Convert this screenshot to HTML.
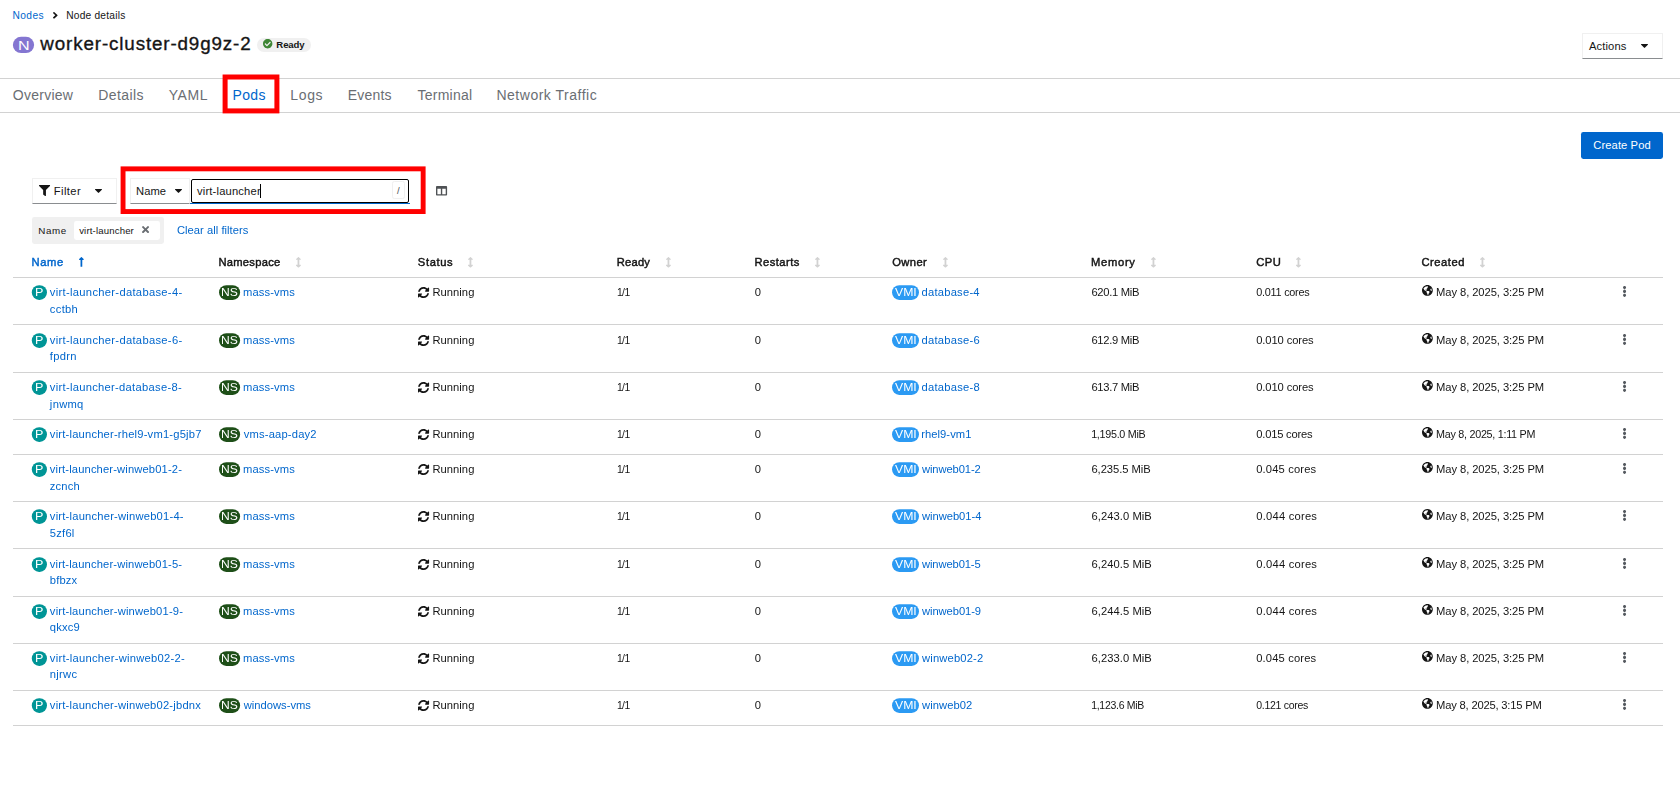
<!DOCTYPE html>
<html lang="en"><head><meta charset="utf-8"><title>worker-cluster-d9g9z-2 · Node details</title>
<style>
html,body{margin:0;padding:0;background:#fff}
body{width:1680px;height:792px;position:relative;overflow:hidden;font-family:"Liberation Sans",sans-serif;color:#151515}
.t{position:absolute;white-space:nowrap;margin:0;font-weight:400;text-decoration:none;display:block}
.i{position:absolute;display:block;overflow:visible}
.b{position:absolute}
.c{display:contents}
.g{position:absolute;left:0;top:0;width:1680px;height:792px;will-change:transform}
</style></head><body>
<nav class="c" aria-label="Breadcrumb">
<a class="t" style="left:12.56px;top:8.00px;font-size:10.2px;line-height:15.3px;color:#0066cc;letter-spacing:0.380px;">Nodes</a>
<svg class="i" style="left:52.50px;top:12.10px;width:4.60px;height:6.70px" viewBox="24.75 95.95 206.59 320.1" preserveAspectRatio="none" fill="#151515"><path d="M224.3 273l-136 136c-9.4 9.4-24.6 9.4-33.9 0l-22.6-22.6c-9.4-9.4-9.4-24.6 0-33.900l96.400-96.400-96.400-96.400c-9.400-9.400-9.400-24.600 0-33.900L54.300 103c9.400-9.400 24.600-9.400 33.900 0l136 136c9.500 9.400 9.500 24.600.1 34z"/></svg>
<span class="t" style="left:66.16px;top:8.00px;font-size:10.2px;line-height:15.3px;color:#151515;letter-spacing:0.227px;">Node details</span>
</nav>
<header class="c">
<svg class="i" style="left:11px;top:35px;width:25px;height:20px" viewBox="0 0 25 20"><rect x="1.90" y="1.80" width="21.20" height="16.30" rx="8.15" fill="#8476d1"/></svg>
<span class="t" style="left:18.08px;top:36.00px;font-size:13px;line-height:19.5px;color:#fff;transform:scaleX(1.238);transform-origin:0 0;">N</span>
<h1 class="t" style="left:40.33px;top:30.00px;font-size:18.8px;line-height:28.2px;color:#151515;letter-spacing:0.870px;-webkit-text-stroke:0.35px #151515;">worker-cluster-d9g9z-2</h1>
<div class="b" style="left:257.00px;top:38.00px;width:54.00px;height:14.00px;border-radius:7px;background:#f0f0f0"></div>
<svg class="i" style="left:263.10px;top:39.30px;width:9.40px;height:9.40px" viewBox="8 8 496 496" preserveAspectRatio="none" fill="#3e8635"><path d="M504 256c0 136.967-111.033 248-248 248S8 392.967 8 256 119.033 8 256 8s248 111.033 248 248zM227.314 387.314l184-184c6.248-6.248 6.248-16.379 0-22.627l-22.627-22.627c-6.248-6.249-16.379-6.249-22.628 0L216 308.118l-70.059-70.059c-6.248-6.248-16.379-6.248-22.628 0l-22.627 22.627c-6.248 6.248-6.248 16.379 0 22.627l104 104c6.249 6.249 16.379 6.249 22.628.001z"/></svg>
<span class="t" style="left:276.36px;top:38.00px;font-size:9.6px;line-height:14.4px;color:#151515;letter-spacing:-0.157px;font-weight:700;">Ready</span>
<div class="b" style="left:1582.00px;top:33.00px;width:81.00px;height:26.00px;border:1px solid #f0f0f0;border-bottom:1px solid #8a8d90;box-sizing:border-box;background:#fff"></div>
<span class="t" style="left:1588.98px;top:38.00px;font-size:11.2px;line-height:16.8px;color:#151515;letter-spacing:0.115px;">Actions</span>
<svg class="i" style="left:1641.00px;top:44.00px;width:7.00px;height:4.00px" viewBox="11.3 192 297.31 168.65" preserveAspectRatio="none" fill="#151515"><path d="M31.3 192h257.3c17.8 0 26.7 21.5 14.1 34.1L174.1 354.8c-7.8 7.8-20.5 7.8-28.3 0L17.2 226.1C4.6 213.5 13.5 192 31.3 192z"/></svg>
</header>
<nav class="c" aria-label="Node tabs">
<div class="b" style="left:0.00px;top:78.00px;width:1680.00px;height:1.00px;background:#d2d2d2"></div>
<div class="b" style="left:0.00px;top:112.00px;width:1680.00px;height:1.00px;background:#d2d2d2"></div>
<span class="t" style="left:12.84px;top:85.00px;font-size:14px;line-height:21.0px;color:#6a6e73;letter-spacing:0.253px;">Overview</span>
<span class="t" style="left:98.35px;top:85.00px;font-size:14px;line-height:21.0px;color:#6a6e73;letter-spacing:0.394px;">Details</span>
<span class="t" style="left:168.69px;top:85.00px;font-size:14px;line-height:21.0px;color:#6a6e73;letter-spacing:0.561px;">YAML</span>
<span class="t" style="left:232.55px;top:85.00px;font-size:14px;line-height:21.0px;color:#0066cc;letter-spacing:0.346px;">Pods</span>
<span class="t" style="left:290.35px;top:85.00px;font-size:14px;line-height:21.0px;color:#6a6e73;letter-spacing:0.631px;">Logs</span>
<span class="t" style="left:347.65px;top:85.00px;font-size:14px;line-height:21.0px;color:#6a6e73;letter-spacing:0.231px;">Events</span>
<span class="t" style="left:417.39px;top:85.00px;font-size:14px;line-height:21.0px;color:#6a6e73;letter-spacing:0.277px;">Terminal</span>
<span class="t" style="left:496.45px;top:85.00px;font-size:14px;line-height:21.0px;color:#6a6e73;letter-spacing:0.515px;">Network Traffic</span>
<svg class="i" style="left:221px;top:73px;width:60px;height:42px" viewBox="0 0 60 42"><rect x="4.10" y="4.00" width="51.80" height="33.90" fill="none" stroke="#ff0000" stroke-width="5"/></svg>
</nav>
<main class="c">
<div class="b" style="left:1581.00px;top:132.00px;width:82.00px;height:27.00px;background:#0066cc;border-radius:2.4px"></div>
<span class="t" style="left:1593.33px;top:137.00px;font-size:11.2px;line-height:16.8px;color:#fff;letter-spacing:0.081px;">Create Pod</span>
<div class="c" role="toolbar">
<div class="b" style="left:32.00px;top:178.00px;width:85.00px;height:26.00px;border:1px solid #f0f0f0;border-bottom:1px solid #8a8d90;box-sizing:border-box"></div>
<svg class="i" style="left:39.00px;top:185.00px;width:11.10px;height:11.10px" viewBox="0 0 512 512" preserveAspectRatio="none" fill="#151515"><path d="M487.976 0H24.028C2.71 0-8.047 25.866 7.058 40.971L192 225.941V432c0 7.831 3.821 15.17 10.237 19.662l80 55.98C298.02 518.69 320 507.493 320 487.98V225.941l184.947-184.97C520.021 25.896 509.338 0 487.976 0z"/></svg>
<span class="t" style="left:53.78px;top:183.00px;font-size:11.2px;line-height:16.8px;color:#151515;letter-spacing:0.403px;">Filter</span>
<svg class="i" style="left:95.00px;top:189.30px;width:7.00px;height:4.00px" viewBox="11.3 192 297.31 168.65" preserveAspectRatio="none" fill="#151515"><path d="M31.3 192h257.3c17.8 0 26.7 21.5 14.1 34.1L174.1 354.8c-7.8 7.8-20.5 7.8-28.3 0L17.2 226.1C4.6 213.5 13.5 192 31.3 192z"/></svg>
<div class="b" style="left:130.00px;top:178.00px;width:60.00px;height:26.00px;border:1px solid #f0f0f0;border-bottom:1px solid #8a8d90;box-sizing:border-box"></div>
<span class="t" style="left:136.08px;top:183.00px;font-size:11.2px;line-height:16.8px;color:#151515;letter-spacing:0.045px;">Name</span>
<svg class="i" style="left:175.00px;top:189.30px;width:7.00px;height:4.00px" viewBox="11.3 192 297.31 168.65" preserveAspectRatio="none" fill="#151515"><path d="M31.3 192h257.3c17.8 0 26.7 21.5 14.1 34.1L174.1 354.8c-7.8 7.8-20.5 7.8-28.3 0L17.2 226.1C4.6 213.5 13.5 192 31.3 192z"/></svg>
<div class="b" style="left:190.60px;top:179.00px;width:218.60px;height:24.00px;border:1.6px solid #000;border-radius:2px;box-sizing:border-box"></div>
<div class="b" style="left:190.00px;top:203.00px;width:220.00px;height:1.00px;background:#0066cc"></div>
<span class="t" style="left:196.97px;top:183.00px;font-size:11.2px;line-height:16.8px;color:#151515;letter-spacing:0.175px;">virt-launcher</span>
<div class="b" style="left:260.00px;top:184.20px;width:1.20px;height:13.60px;background:#000"></div>
<div class="b" style="left:392.20px;top:181.40px;width:12.40px;height:17.20px;border:1px solid #f0f0f0;border-radius:2.4px;box-sizing:border-box"></div>
<span class="t" style="left:397.00px;top:184.00px;font-size:9.6px;line-height:14.4px;color:#4f5255;">/</span>
<svg class="i" style="left:119px;top:165px;width:308px;height:50px" viewBox="0 0 308 50"><rect x="4.05" y="3.85" width="300.10" height="42.70" fill="none" stroke="#ff0000" stroke-width="4.9"/></svg>
<svg class="i" style="left:436.00px;top:185.80px;width:11.10px;height:9.60px" viewBox="0 32 512 448" preserveAspectRatio="none" fill="#4f5255"><path d="M464 32H48C21.49 32 0 53.49 0 80v352c0 26.51 21.49 48 48 48h416c26.510 0 48-21.490 48-48V80c0-26.510-21.490-48-48-48zM224 416H64V160h160v256zm224 0H288V160h160v256z"/></svg>
</div>
<div class="c" role="group" aria-label="Name">
<div class="b" style="left:32.20px;top:217.30px;width:131.80px;height:26.40px;background:#f0f0f0;border-radius:2.4px"></div>
<span class="t" style="left:38.20px;top:224.00px;font-size:9.8px;line-height:14.7px;color:#151515;letter-spacing:0.631px;">Name</span>
<div class="b" style="left:74.00px;top:220.80px;width:86.00px;height:19.20px;background:#fff;border-radius:2.4px"></div>
<span class="t" style="left:79.17px;top:224.00px;font-size:9.6px;line-height:14.4px;color:#151515;letter-spacing:0.156px;">virt-launcher</span>
<svg class="i" style="left:142.10px;top:226.10px;width:7.10px;height:7.10px" viewBox="0 80 352 352" preserveAspectRatio="none" fill="#6a6e73"><path d="M242.72 256l100.07-100.07c12.28-12.28 12.28-32.19 0-44.48l-22.24-22.24c-12.28-12.28-32.19-12.28-44.48 0L176 189.28 75.93 89.21c-12.28-12.28-32.19-12.28-44.48 0L9.21 111.45c-12.28 12.28-12.28 32.19 0 44.48L109.28 256 9.21 356.07c-12.28 12.28-12.28 32.19 0 44.48l22.24 22.24c12.28 12.28 32.2 12.28 44.48 0L176 322.72l100.07 100.07c12.28 12.28 32.2 12.28 44.48 0l22.24-22.24c12.28-12.28 12.28-32.19 0-44.48L242.72 256z"/></svg>
<a class="t" style="left:177.23px;top:222.00px;font-size:11.2px;line-height:16.8px;color:#0066cc;letter-spacing:0.026px;will-change:transform;">Clear all filters</a>
</div>
<div class="g" role="table" aria-label="Pods">
<div class="c" role="row">
<span class="t" style="left:31.58px;top:254.00px;font-size:11.2px;line-height:16.8px;color:#0066cc;letter-spacing:0.612px;-webkit-text-stroke:0.45px #0066cc;">Name</span>
<svg class="i" style="left:79.20px;top:256.70px;width:4.80px;height:9.70px" viewBox="17.89 32 220.21 448" preserveAspectRatio="none" fill="#0066cc"><path d="M88 166.059V468c0 6.627 5.373 12 12 12h56c6.627 0 12-5.373 12-12V166.059h46.059c21.382 0 32.09-25.851 16.971-40.971l-86.059-86.059c-9.373-9.373-24.569-9.373-33.941 0l-86.059 86.059c-15.119 15.119-4.411 40.971 16.971 40.971H88z"/></svg>
<span class="t" style="left:218.38px;top:254.00px;font-size:11.2px;line-height:16.8px;color:#151515;letter-spacing:0.269px;-webkit-text-stroke:0.45px #151515;">Namespace</span>
<svg class="i" style="left:295.90px;top:256.50px;width:4.90px;height:10.60px" viewBox="17.89 0 220.21 512" preserveAspectRatio="none" fill="#d2d2d2"><path d="M214.059 377.941H168V134.059h46.059c21.382 0 32.09-25.851 16.971-40.971L144.971 7.029c-9.373-9.373-24.568-9.373-33.941 0L24.971 93.088c-15.119 15.119-4.411 40.971 16.971 40.971H88v243.882H41.941c-21.382 0-32.09 25.851-16.971 40.971l86.059 86.059c9.373 9.373 24.568 9.373 33.941 0l86.059-86.059c15.12-15.119 4.412-40.971-16.97-40.971z"/></svg>
<span class="t" style="left:417.80px;top:254.00px;font-size:11.2px;line-height:16.8px;color:#151515;letter-spacing:0.631px;-webkit-text-stroke:0.45px #151515;">Status</span>
<svg class="i" style="left:468.40px;top:256.50px;width:4.90px;height:10.60px" viewBox="17.89 0 220.21 512" preserveAspectRatio="none" fill="#d2d2d2"><path d="M214.059 377.941H168V134.059h46.059c21.382 0 32.09-25.851 16.971-40.971L144.971 7.029c-9.373-9.373-24.568-9.373-33.941 0L24.971 93.088c-15.119 15.119-4.411 40.971 16.971 40.971H88v243.882H41.941c-21.382 0-32.09 25.851-16.971 40.971l86.059 86.059c9.373 9.373 24.568 9.373 33.941 0l86.059-86.059c15.12-15.119 4.412-40.971-16.97-40.971z"/></svg>
<span class="t" style="left:616.78px;top:254.00px;font-size:11.2px;line-height:16.8px;color:#151515;letter-spacing:0.215px;-webkit-text-stroke:0.45px #151515;">Ready</span>
<svg class="i" style="left:666.10px;top:256.50px;width:4.90px;height:10.60px" viewBox="17.89 0 220.21 512" preserveAspectRatio="none" fill="#d2d2d2"><path d="M214.059 377.941H168V134.059h46.059c21.382 0 32.09-25.851 16.971-40.971L144.971 7.029c-9.373-9.373-24.568-9.373-33.941 0L24.971 93.088c-15.119 15.119-4.411 40.971 16.971 40.971H88v243.882H41.941c-21.382 0-32.09 25.851-16.971 40.971l86.059 86.059c9.373 9.373 24.568 9.373 33.941 0l86.059-86.059c15.12-15.119 4.412-40.971-16.97-40.971z"/></svg>
<span class="t" style="left:754.38px;top:254.00px;font-size:11.2px;line-height:16.8px;color:#151515;letter-spacing:0.475px;-webkit-text-stroke:0.45px #151515;">Restarts</span>
<svg class="i" style="left:815.10px;top:256.50px;width:4.90px;height:10.60px" viewBox="17.89 0 220.21 512" preserveAspectRatio="none" fill="#d2d2d2"><path d="M214.059 377.941H168V134.059h46.059c21.382 0 32.09-25.851 16.971-40.971L144.971 7.029c-9.373-9.373-24.568-9.373-33.941 0L24.971 93.088c-15.119 15.119-4.411 40.971 16.971 40.971H88v243.882H41.941c-21.382 0-32.09 25.851-16.971 40.971l86.059 86.059c9.373 9.373 24.568 9.373 33.941 0l86.059-86.059c15.12-15.119 4.412-40.971-16.97-40.971z"/></svg>
<span class="t" style="left:892.17px;top:254.00px;font-size:11.2px;line-height:16.8px;color:#151515;letter-spacing:0.430px;-webkit-text-stroke:0.45px #151515;">Owner</span>
<svg class="i" style="left:942.80px;top:256.50px;width:4.90px;height:10.60px" viewBox="17.89 0 220.21 512" preserveAspectRatio="none" fill="#d2d2d2"><path d="M214.059 377.941H168V134.059h46.059c21.382 0 32.09-25.851 16.971-40.971L144.971 7.029c-9.373-9.373-24.568-9.373-33.941 0L24.971 93.088c-15.119 15.119-4.411 40.971 16.971 40.971H88v243.882H41.941c-21.382 0-32.09 25.851-16.971 40.971l86.059 86.059c9.373 9.373 24.568 9.373 33.941 0l86.059-86.059c15.12-15.119 4.412-40.971-16.97-40.971z"/></svg>
<span class="t" style="left:1091.08px;top:254.00px;font-size:11.2px;line-height:16.8px;color:#151515;letter-spacing:0.697px;-webkit-text-stroke:0.45px #151515;">Memory</span>
<svg class="i" style="left:1151.10px;top:256.50px;width:4.90px;height:10.60px" viewBox="17.89 0 220.21 512" preserveAspectRatio="none" fill="#d2d2d2"><path d="M214.059 377.941H168V134.059h46.059c21.382 0 32.09-25.851 16.971-40.971L144.971 7.029c-9.373-9.373-24.568-9.373-33.941 0L24.971 93.088c-15.119 15.119-4.411 40.971 16.971 40.971H88v243.882H41.941c-21.382 0-32.09 25.851-16.971 40.971l86.059 86.059c9.373 9.373 24.568 9.373 33.941 0l86.059-86.059c15.12-15.119 4.412-40.971-16.97-40.971z"/></svg>
<span class="t" style="left:1256.13px;top:254.00px;font-size:11.2px;line-height:16.8px;color:#151515;letter-spacing:0.540px;-webkit-text-stroke:0.45px #151515;">CPU</span>
<svg class="i" style="left:1296.10px;top:256.50px;width:4.90px;height:10.60px" viewBox="17.89 0 220.21 512" preserveAspectRatio="none" fill="#d2d2d2"><path d="M214.059 377.941H168V134.059h46.059c21.382 0 32.09-25.851 16.971-40.971L144.971 7.029c-9.373-9.373-24.568-9.373-33.941 0L24.971 93.088c-15.119 15.119-4.411 40.971 16.971 40.971H88v243.882H41.941c-21.382 0-32.09 25.851-16.971 40.971l86.059 86.059c9.373 9.373 24.568 9.373 33.941 0l86.059-86.059c15.12-15.119 4.412-40.971-16.97-40.971z"/></svg>
<span class="t" style="left:1421.43px;top:254.00px;font-size:11.2px;line-height:16.8px;color:#151515;letter-spacing:0.540px;-webkit-text-stroke:0.45px #151515;">Created</span>
<svg class="i" style="left:1479.90px;top:256.50px;width:4.90px;height:10.60px" viewBox="17.89 0 220.21 512" preserveAspectRatio="none" fill="#d2d2d2"><path d="M214.059 377.941H168V134.059h46.059c21.382 0 32.09-25.851 16.971-40.971L144.971 7.029c-9.373-9.373-24.568-9.373-33.941 0L24.971 93.088c-15.119 15.119-4.411 40.971 16.971 40.971H88v243.882H41.941c-21.382 0-32.09 25.851-16.971 40.971l86.059 86.059c9.373 9.373 24.568 9.373 33.941 0l86.059-86.059c15.12-15.119 4.412-40.971-16.97-40.971z"/></svg>
<div class="b" style="left:13.00px;top:277.00px;width:1650.00px;height:1.00px;background:#d2d2d2"></div>
</div>
<div class="c" role="row">
<svg class="i" style="left:30px;top:284px;width:18px;height:17px" viewBox="0 0 18 17"><rect x="1.80" y="1.20" width="15.20" height="14.70" rx="7.35" fill="#009596"/></svg>
<span class="t" style="left:35.17px;top:285.00px;font-size:10.6px;line-height:15.9px;color:#fff;transform:scaleX(1.187);transform-origin:0 0;">P</span>
<a class="t" style="left:49.87px;top:284.00px;font-size:11.2px;line-height:17px;color:#0066cc;letter-spacing:0.304px;">virt-launcher-database-4-<br>cctbh</a>
<svg class="i" style="left:218px;top:284px;width:24px;height:17px" viewBox="0 0 24 17"><rect x="1.00" y="1.20" width="21.10" height="14.70" rx="7.35" fill="#1e4f18"/></svg>
<span class="t" style="left:221.31px;top:285.00px;font-size:10.6px;line-height:15.9px;color:#fff;transform:scaleX(1.144);transform-origin:0 0;">NS</span>
<a class="t" style="left:242.96px;top:284.00px;font-size:11.2px;line-height:16.8px;color:#0066cc;letter-spacing:0.118px;">mass-vms</a>
<svg class="i" style="left:417.80px;top:287.00px;width:11.10px;height:11.10px" viewBox="8 8 496 496" preserveAspectRatio="none" fill="#151515"><path d="M370.72 133.28C339.458 104.008 298.888 87.962 255.848 88c-77.458.068-144.328 53.178-162.791 126.85-1.344 5.363-6.122 9.15-11.651 9.15H24.103c-7.498 0-13.194-6.807-11.807-14.176C33.933 94.924 134.813 8 256 8c66.448 0 126.791 26.136 171.315 68.685L463.03 40.97C478.149 25.851 504 36.559 504 57.941V192c0 13.255-10.745 24-24 24H345.941c-21.382 0-32.09-25.851-16.971-40.971l41.75-41.749zM32 296h134.059c21.382 0 32.09 25.851 16.971 40.971l-41.75 41.75c31.262 29.273 71.835 45.319 114.876 45.28 77.418-.07 144.315-53.144 162.787-126.849 1.344-5.363 6.122-9.15 11.651-9.15h57.304c7.498 0 13.194 6.807 11.807 14.176C478.067 417.076 377.187 504 256 504c-66.448 0-126.791-26.136-171.315-68.685L48.97 471.03C33.851 486.149 8 475.441 8 454.059V320c0-13.255 10.745-24 24-24z"/></svg>
<span class="t" style="left:432.38px;top:284.00px;font-size:11.2px;line-height:16.8px;color:#151515;letter-spacing:0.053px;">Running</span>
<span class="t" style="left:616.92px;top:285.00px;font-size:10.3px;line-height:16.8px;color:#151515;letter-spacing:-0.550px;">1/1</span>
<span class="t" style="left:754.86px;top:284.00px;font-size:11.2px;line-height:16.8px;color:#151515;letter-spacing:1.041px;">0</span>
<svg class="i" style="left:891px;top:284px;width:29px;height:17px" viewBox="0 0 29 17"><rect x="1.00" y="1.20" width="27.00" height="14.70" rx="7.35" fill="#2b9af3"/></svg>
<span class="t" style="left:895.15px;top:285.00px;font-size:10.6px;line-height:15.9px;color:#fff;transform:scaleX(1.155);transform-origin:0 0;">VMI</span>
<a class="t" style="left:921.54px;top:284.00px;font-size:11.2px;line-height:16.8px;color:#0066cc;letter-spacing:0.227px;">database-4</a>
<span class="t" style="left:1091.43px;top:284.00px;font-size:11.2px;line-height:16.8px;color:#151515;letter-spacing:-0.284px;">620.1 MiB</span>
<span class="t" style="left:1256.28px;top:284.00px;font-size:10.86px;line-height:16.8px;color:#151515;letter-spacing:-0.253px;">0.011 cores</span>
<svg class="i" style="left:1422.20px;top:285.00px;width:10.80px;height:10.80px" viewBox="0 8 496 496" preserveAspectRatio="none" fill="#151515"><path d="M248 8C111.03 8 0 119.03 0 256s111.03 248 248 248 248-111.03 248-248S384.97 8 248 8zm82.29 357.6c-3.9 3.88-7.99 7.95-11.31 11.28-2.99 3-5.1 6.7-6.17 10.71-1.51 5.66-2.73 11.38-4.77 16.87l-17.39 46.85c-13.76 3-28 4.69-42.65 4.69v-27.38c1.69-12.62-7.64-36.26-22.63-51.25-6-6-9.37-14.14-9.37-22.63v-32.01c0-11.64-6.27-22.34-16.46-27.97-14.37-7.95-34.81-19.06-48.81-26.11-11.48-5.78-22.1-13.14-31.65-21.75l-.8-.72a114.792 114.792 0 0 1-18.06-20.74c-9.38-13.77-24.66-36.42-34.59-51.14 20.47-45.5 57.36-82.04 103.2-101.89l24.01 12.01C203.48 89.74 216 82.01 216 70.11v-11.3c7.99-1.29 16.12-2.11 24.39-2.42l28.3 28.3c6.25 6.25 6.25 16.38 0 22.63L264 112l-10.34 10.34c-3.12 3.12-3.12 8.19 0 11.31l4.69 4.69c3.12 3.12 3.12 8.19 0 11.31l-8 8a8.008 8.008 0 0 1-5.66 2.34h-8.99c-2.08 0-4.08.81-5.58 2.27l-9.92 9.65a8.008 8.008 0 0 0-1.58 9.31l15.59 31.19c2.66 5.32-1.21 11.58-7.15 11.58h-5.64c-1.93 0-3.79-.7-5.24-1.96l-9.28-8.06a16.017 16.017 0 0 0-15.55-3.1l-31.17 10.39a11.95 11.95 0 0 0-8.17 11.34c0 4.53 2.56 8.66 6.61 10.69l11.08 5.54c9.41 4.71 19.79 7.16 30.31 7.16s22.59 27.29 32 32h66.75c8.49 0 16.62 3.37 22.63 9.37l13.69 13.69a30.503 30.503 0 0 1 8.93 21.57 46.536 46.536 0 0 1-13.72 32.98zM417 274.25c-5.79-1.45-10.84-5-14.15-9.97l-17.98-26.97a23.97 23.97 0 0 1 0-26.62l19.59-29.38c2.32-3.47 5.5-6.29 9.24-8.15l12.98-6.49C440.2 193.59 448 223.87 448 256c0 8.67-.74 17.16-1.82 25.54L417 274.25z"/></svg>
<span class="t" style="left:1436.08px;top:284.00px;font-size:11.2px;line-height:16.8px;color:#151515;letter-spacing:-0.076px;">May 8, 2025, 3:25 PM</span>
<svg class="i" style="left:1623.00px;top:286.40px;width:3.10px;height:10.90px" viewBox="24 8 144 496" preserveAspectRatio="none" fill="#54595f"><path d="M96 184c39.8 0 72 32.2 72 72s-32.2 72-72 72-72-32.2-72-72 32.2-72 72-72zM24 80c0 39.8 32.2 72 72 72s72-32.2 72-72S135.800 8 96 8 24 40.200 24 80zm0 352c0 39.8 32.2 72 72 72s72-32.2 72-72-32.2-72-72-72-72 32.2-72 72z"/></svg>
<div class="b" style="left:13.00px;top:324.00px;width:1650.00px;height:1.00px;background:#d2d2d2"></div>
</div>
<div class="c" role="row">
<svg class="i" style="left:30px;top:332px;width:18px;height:17px" viewBox="0 0 18 17"><rect x="1.80" y="1.20" width="15.20" height="14.70" rx="7.35" fill="#009596"/></svg>
<span class="t" style="left:35.17px;top:333.00px;font-size:10.6px;line-height:15.9px;color:#fff;transform:scaleX(1.187);transform-origin:0 0;">P</span>
<a class="t" style="left:49.87px;top:332.00px;font-size:11.2px;line-height:16px;color:#0066cc;letter-spacing:0.304px;">virt-launcher-database-6-<br>fpdrn</a>
<svg class="i" style="left:218px;top:332px;width:24px;height:17px" viewBox="0 0 24 17"><rect x="1.00" y="1.20" width="21.10" height="14.70" rx="7.35" fill="#1e4f18"/></svg>
<span class="t" style="left:221.31px;top:333.00px;font-size:10.6px;line-height:15.9px;color:#fff;transform:scaleX(1.144);transform-origin:0 0;">NS</span>
<a class="t" style="left:242.96px;top:332.00px;font-size:11.2px;line-height:16.8px;color:#0066cc;letter-spacing:0.118px;">mass-vms</a>
<svg class="i" style="left:417.80px;top:335.00px;width:11.10px;height:11.10px" viewBox="8 8 496 496" preserveAspectRatio="none" fill="#151515"><path d="M370.72 133.28C339.458 104.008 298.888 87.962 255.848 88c-77.458.068-144.328 53.178-162.791 126.85-1.344 5.363-6.122 9.15-11.651 9.15H24.103c-7.498 0-13.194-6.807-11.807-14.176C33.933 94.924 134.813 8 256 8c66.448 0 126.791 26.136 171.315 68.685L463.03 40.97C478.149 25.851 504 36.559 504 57.941V192c0 13.255-10.745 24-24 24H345.941c-21.382 0-32.09-25.851-16.971-40.971l41.75-41.749zM32 296h134.059c21.382 0 32.09 25.851 16.971 40.971l-41.75 41.75c31.262 29.273 71.835 45.319 114.876 45.28 77.418-.07 144.315-53.144 162.787-126.849 1.344-5.363 6.122-9.15 11.651-9.15h57.304c7.498 0 13.194 6.807 11.807 14.176C478.067 417.076 377.187 504 256 504c-66.448 0-126.791-26.136-171.315-68.685L48.97 471.03C33.851 486.149 8 475.441 8 454.059V320c0-13.255 10.745-24 24-24z"/></svg>
<span class="t" style="left:432.38px;top:332.00px;font-size:11.2px;line-height:16.8px;color:#151515;letter-spacing:0.053px;">Running</span>
<span class="t" style="left:616.92px;top:333.00px;font-size:10.3px;line-height:16.8px;color:#151515;letter-spacing:-0.550px;">1/1</span>
<span class="t" style="left:754.86px;top:332.00px;font-size:11.2px;line-height:16.8px;color:#151515;letter-spacing:1.041px;">0</span>
<svg class="i" style="left:891px;top:332px;width:29px;height:17px" viewBox="0 0 29 17"><rect x="1.00" y="1.20" width="27.00" height="14.70" rx="7.35" fill="#2b9af3"/></svg>
<span class="t" style="left:895.15px;top:333.00px;font-size:10.6px;line-height:15.9px;color:#fff;transform:scaleX(1.155);transform-origin:0 0;">VMI</span>
<a class="t" style="left:921.54px;top:332.00px;font-size:11.2px;line-height:16.8px;color:#0066cc;letter-spacing:0.245px;">database-6</a>
<span class="t" style="left:1091.43px;top:332.00px;font-size:11.2px;line-height:16.8px;color:#151515;letter-spacing:-0.284px;">612.9 MiB</span>
<span class="t" style="left:1256.26px;top:332.00px;font-size:11.2px;line-height:16.8px;color:#151515;letter-spacing:-0.109px;">0.010 cores</span>
<svg class="i" style="left:1422.20px;top:333.00px;width:10.80px;height:10.80px" viewBox="0 8 496 496" preserveAspectRatio="none" fill="#151515"><path d="M248 8C111.03 8 0 119.03 0 256s111.03 248 248 248 248-111.03 248-248S384.97 8 248 8zm82.29 357.6c-3.9 3.88-7.99 7.95-11.31 11.28-2.99 3-5.1 6.7-6.17 10.71-1.51 5.66-2.73 11.38-4.77 16.87l-17.39 46.85c-13.76 3-28 4.69-42.65 4.69v-27.38c1.69-12.62-7.64-36.26-22.63-51.25-6-6-9.37-14.14-9.37-22.63v-32.01c0-11.64-6.27-22.34-16.46-27.97-14.37-7.95-34.81-19.06-48.81-26.11-11.48-5.78-22.1-13.14-31.65-21.75l-.8-.72a114.792 114.792 0 0 1-18.06-20.74c-9.38-13.77-24.66-36.42-34.59-51.14 20.47-45.5 57.36-82.04 103.2-101.89l24.01 12.01C203.48 89.74 216 82.01 216 70.11v-11.3c7.99-1.29 16.12-2.11 24.39-2.42l28.3 28.3c6.25 6.25 6.25 16.38 0 22.63L264 112l-10.34 10.34c-3.12 3.12-3.12 8.19 0 11.31l4.69 4.69c3.12 3.12 3.12 8.19 0 11.31l-8 8a8.008 8.008 0 0 1-5.66 2.34h-8.99c-2.08 0-4.08.81-5.58 2.27l-9.92 9.65a8.008 8.008 0 0 0-1.58 9.31l15.59 31.19c2.66 5.32-1.21 11.58-7.15 11.58h-5.64c-1.93 0-3.79-.7-5.24-1.96l-9.28-8.06a16.017 16.017 0 0 0-15.55-3.1l-31.17 10.39a11.95 11.95 0 0 0-8.17 11.34c0 4.53 2.56 8.66 6.61 10.69l11.08 5.54c9.41 4.71 19.79 7.16 30.31 7.16s22.59 27.29 32 32h66.75c8.49 0 16.62 3.37 22.63 9.37l13.69 13.69a30.503 30.503 0 0 1 8.93 21.57 46.536 46.536 0 0 1-13.72 32.98zM417 274.25c-5.79-1.45-10.84-5-14.15-9.97l-17.98-26.97a23.97 23.97 0 0 1 0-26.62l19.59-29.38c2.32-3.47 5.5-6.29 9.24-8.15l12.98-6.49C440.2 193.59 448 223.87 448 256c0 8.67-.74 17.16-1.82 25.54L417 274.25z"/></svg>
<span class="t" style="left:1436.08px;top:332.00px;font-size:11.2px;line-height:16.8px;color:#151515;letter-spacing:-0.076px;">May 8, 2025, 3:25 PM</span>
<svg class="i" style="left:1623.00px;top:334.40px;width:3.10px;height:10.90px" viewBox="24 8 144 496" preserveAspectRatio="none" fill="#54595f"><path d="M96 184c39.8 0 72 32.2 72 72s-32.2 72-72 72-72-32.2-72-72 32.2-72 72-72zM24 80c0 39.8 32.2 72 72 72s72-32.2 72-72S135.800 8 96 8 24 40.200 24 80zm0 352c0 39.8 32.2 72 72 72s72-32.2 72-72-32.2-72-72-72-72 32.2-72 72z"/></svg>
<div class="b" style="left:13.00px;top:372.00px;width:1650.00px;height:1.00px;background:#d2d2d2"></div>
</div>
<div class="c" role="row">
<svg class="i" style="left:30px;top:379px;width:18px;height:17px" viewBox="0 0 18 17"><rect x="1.80" y="1.20" width="15.20" height="14.70" rx="7.35" fill="#009596"/></svg>
<span class="t" style="left:35.17px;top:380.00px;font-size:10.6px;line-height:15.9px;color:#fff;transform:scaleX(1.187);transform-origin:0 0;">P</span>
<a class="t" style="left:49.87px;top:379.00px;font-size:11.2px;line-height:17px;color:#0066cc;letter-spacing:0.283px;">virt-launcher-database-8-<br>jnwmq</a>
<svg class="i" style="left:218px;top:379px;width:24px;height:17px" viewBox="0 0 24 17"><rect x="1.00" y="1.20" width="21.10" height="14.70" rx="7.35" fill="#1e4f18"/></svg>
<span class="t" style="left:221.31px;top:380.00px;font-size:10.6px;line-height:15.9px;color:#fff;transform:scaleX(1.144);transform-origin:0 0;">NS</span>
<a class="t" style="left:242.96px;top:379.00px;font-size:11.2px;line-height:16.8px;color:#0066cc;letter-spacing:0.118px;">mass-vms</a>
<svg class="i" style="left:417.80px;top:382.00px;width:11.10px;height:11.10px" viewBox="8 8 496 496" preserveAspectRatio="none" fill="#151515"><path d="M370.72 133.28C339.458 104.008 298.888 87.962 255.848 88c-77.458.068-144.328 53.178-162.791 126.85-1.344 5.363-6.122 9.15-11.651 9.15H24.103c-7.498 0-13.194-6.807-11.807-14.176C33.933 94.924 134.813 8 256 8c66.448 0 126.791 26.136 171.315 68.685L463.03 40.97C478.149 25.851 504 36.559 504 57.941V192c0 13.255-10.745 24-24 24H345.941c-21.382 0-32.09-25.851-16.971-40.971l41.75-41.749zM32 296h134.059c21.382 0 32.09 25.851 16.971 40.971l-41.75 41.75c31.262 29.273 71.835 45.319 114.876 45.28 77.418-.07 144.315-53.144 162.787-126.849 1.344-5.363 6.122-9.15 11.651-9.15h57.304c7.498 0 13.194 6.807 11.807 14.176C478.067 417.076 377.187 504 256 504c-66.448 0-126.791-26.136-171.315-68.685L48.97 471.03C33.851 486.149 8 475.441 8 454.059V320c0-13.255 10.745-24 24-24z"/></svg>
<span class="t" style="left:432.38px;top:379.00px;font-size:11.2px;line-height:16.8px;color:#151515;letter-spacing:0.053px;">Running</span>
<span class="t" style="left:616.92px;top:380.00px;font-size:10.3px;line-height:16.8px;color:#151515;letter-spacing:-0.550px;">1/1</span>
<span class="t" style="left:754.86px;top:379.00px;font-size:11.2px;line-height:16.8px;color:#151515;letter-spacing:1.041px;">0</span>
<svg class="i" style="left:891px;top:379px;width:29px;height:17px" viewBox="0 0 29 17"><rect x="1.00" y="1.20" width="27.00" height="14.70" rx="7.35" fill="#2b9af3"/></svg>
<span class="t" style="left:895.15px;top:380.00px;font-size:10.6px;line-height:15.9px;color:#fff;transform:scaleX(1.155);transform-origin:0 0;">VMI</span>
<a class="t" style="left:921.54px;top:379.00px;font-size:11.2px;line-height:16.8px;color:#0066cc;letter-spacing:0.245px;">database-8</a>
<span class="t" style="left:1091.43px;top:379.00px;font-size:11.2px;line-height:16.8px;color:#151515;letter-spacing:-0.284px;">613.7 MiB</span>
<span class="t" style="left:1256.26px;top:379.00px;font-size:11.2px;line-height:16.8px;color:#151515;letter-spacing:-0.109px;">0.010 cores</span>
<svg class="i" style="left:1422.20px;top:380.00px;width:10.80px;height:10.80px" viewBox="0 8 496 496" preserveAspectRatio="none" fill="#151515"><path d="M248 8C111.03 8 0 119.03 0 256s111.03 248 248 248 248-111.03 248-248S384.97 8 248 8zm82.29 357.6c-3.9 3.88-7.99 7.95-11.31 11.28-2.99 3-5.1 6.7-6.17 10.71-1.51 5.66-2.73 11.38-4.77 16.87l-17.39 46.85c-13.76 3-28 4.69-42.65 4.69v-27.38c1.69-12.62-7.64-36.26-22.63-51.25-6-6-9.37-14.14-9.37-22.63v-32.01c0-11.64-6.27-22.34-16.46-27.97-14.37-7.95-34.81-19.06-48.81-26.11-11.48-5.78-22.1-13.14-31.65-21.75l-.8-.72a114.792 114.792 0 0 1-18.06-20.74c-9.38-13.77-24.66-36.42-34.59-51.14 20.47-45.5 57.36-82.04 103.2-101.89l24.01 12.01C203.48 89.74 216 82.01 216 70.11v-11.3c7.99-1.29 16.12-2.11 24.39-2.42l28.3 28.3c6.25 6.25 6.25 16.38 0 22.63L264 112l-10.34 10.34c-3.12 3.12-3.12 8.19 0 11.31l4.69 4.69c3.12 3.12 3.12 8.19 0 11.31l-8 8a8.008 8.008 0 0 1-5.66 2.34h-8.99c-2.08 0-4.08.81-5.58 2.27l-9.92 9.65a8.008 8.008 0 0 0-1.58 9.31l15.59 31.19c2.66 5.32-1.21 11.58-7.15 11.58h-5.64c-1.93 0-3.79-.7-5.24-1.96l-9.28-8.06a16.017 16.017 0 0 0-15.55-3.1l-31.17 10.39a11.95 11.95 0 0 0-8.17 11.34c0 4.53 2.56 8.66 6.61 10.69l11.08 5.54c9.41 4.71 19.79 7.16 30.31 7.16s22.59 27.29 32 32h66.75c8.49 0 16.62 3.37 22.63 9.37l13.69 13.69a30.503 30.503 0 0 1 8.93 21.57 46.536 46.536 0 0 1-13.72 32.98zM417 274.25c-5.79-1.45-10.84-5-14.15-9.97l-17.98-26.97a23.97 23.97 0 0 1 0-26.62l19.59-29.38c2.32-3.47 5.5-6.29 9.24-8.15l12.98-6.49C440.2 193.59 448 223.87 448 256c0 8.67-.74 17.16-1.82 25.54L417 274.25z"/></svg>
<span class="t" style="left:1436.08px;top:379.00px;font-size:11.2px;line-height:16.8px;color:#151515;letter-spacing:-0.076px;">May 8, 2025, 3:25 PM</span>
<svg class="i" style="left:1623.00px;top:381.40px;width:3.10px;height:10.90px" viewBox="24 8 144 496" preserveAspectRatio="none" fill="#54595f"><path d="M96 184c39.8 0 72 32.2 72 72s-32.2 72-72 72-72-32.2-72-72 32.2-72 72-72zM24 80c0 39.8 32.2 72 72 72s72-32.2 72-72S135.800 8 96 8 24 40.200 24 80zm0 352c0 39.8 32.2 72 72 72s72-32.2 72-72-32.2-72-72-72-72 32.2-72 72z"/></svg>
<div class="b" style="left:13.00px;top:419.00px;width:1650.00px;height:1.00px;background:#d2d2d2"></div>
</div>
<div class="c" role="row">
<svg class="i" style="left:30px;top:426px;width:18px;height:17px" viewBox="0 0 18 17"><rect x="1.80" y="1.20" width="15.20" height="14.70" rx="7.35" fill="#009596"/></svg>
<span class="t" style="left:35.17px;top:427.00px;font-size:10.6px;line-height:15.9px;color:#fff;transform:scaleX(1.187);transform-origin:0 0;">P</span>
<a class="t" style="left:49.87px;top:426.00px;font-size:11.2px;line-height:17px;color:#0066cc;letter-spacing:0.193px;">virt-launcher-rhel9-vm1-g5jb7</a>
<svg class="i" style="left:218px;top:426px;width:24px;height:17px" viewBox="0 0 24 17"><rect x="1.00" y="1.20" width="21.10" height="14.70" rx="7.35" fill="#1e4f18"/></svg>
<span class="t" style="left:221.31px;top:427.00px;font-size:10.6px;line-height:15.9px;color:#fff;transform:scaleX(1.144);transform-origin:0 0;">NS</span>
<a class="t" style="left:243.67px;top:426.00px;font-size:11.2px;line-height:16.8px;color:#0066cc;letter-spacing:0.185px;">vms-aap-day2</a>
<svg class="i" style="left:417.80px;top:429.00px;width:11.10px;height:11.10px" viewBox="8 8 496 496" preserveAspectRatio="none" fill="#151515"><path d="M370.72 133.28C339.458 104.008 298.888 87.962 255.848 88c-77.458.068-144.328 53.178-162.791 126.85-1.344 5.363-6.122 9.15-11.651 9.15H24.103c-7.498 0-13.194-6.807-11.807-14.176C33.933 94.924 134.813 8 256 8c66.448 0 126.791 26.136 171.315 68.685L463.03 40.97C478.149 25.851 504 36.559 504 57.941V192c0 13.255-10.745 24-24 24H345.941c-21.382 0-32.09-25.851-16.971-40.971l41.75-41.749zM32 296h134.059c21.382 0 32.09 25.851 16.971 40.971l-41.75 41.75c31.262 29.273 71.835 45.319 114.876 45.28 77.418-.07 144.315-53.144 162.787-126.849 1.344-5.363 6.122-9.15 11.651-9.15h57.304c7.498 0 13.194 6.807 11.807 14.176C478.067 417.076 377.187 504 256 504c-66.448 0-126.791-26.136-171.315-68.685L48.97 471.03C33.851 486.149 8 475.441 8 454.059V320c0-13.255 10.745-24 24-24z"/></svg>
<span class="t" style="left:432.38px;top:426.00px;font-size:11.2px;line-height:16.8px;color:#151515;letter-spacing:0.053px;">Running</span>
<span class="t" style="left:616.92px;top:427.00px;font-size:10.3px;line-height:16.8px;color:#151515;letter-spacing:-0.550px;">1/1</span>
<span class="t" style="left:754.86px;top:426.00px;font-size:11.2px;line-height:16.8px;color:#151515;letter-spacing:1.041px;">0</span>
<svg class="i" style="left:891px;top:426px;width:29px;height:17px" viewBox="0 0 29 17"><rect x="1.00" y="1.20" width="27.00" height="14.70" rx="7.35" fill="#2b9af3"/></svg>
<span class="t" style="left:895.15px;top:427.00px;font-size:10.6px;line-height:15.9px;color:#fff;transform:scaleX(1.155);transform-origin:0 0;">VMI</span>
<a class="t" style="left:921.26px;top:426.00px;font-size:11.2px;line-height:16.8px;color:#0066cc;letter-spacing:0.049px;">rhel9-vm1</a>
<span class="t" style="left:1091.18px;top:426.00px;font-size:10.75px;line-height:16.8px;color:#151515;letter-spacing:-0.289px;">1,195.0 MiB</span>
<span class="t" style="left:1256.26px;top:426.00px;font-size:11.2px;line-height:16.8px;color:#151515;letter-spacing:-0.209px;">0.015 cores</span>
<svg class="i" style="left:1422.20px;top:427.00px;width:10.80px;height:10.80px" viewBox="0 8 496 496" preserveAspectRatio="none" fill="#151515"><path d="M248 8C111.03 8 0 119.03 0 256s111.03 248 248 248 248-111.03 248-248S384.97 8 248 8zm82.29 357.6c-3.9 3.88-7.99 7.95-11.31 11.28-2.99 3-5.1 6.7-6.17 10.71-1.51 5.66-2.73 11.38-4.77 16.87l-17.39 46.85c-13.76 3-28 4.69-42.65 4.69v-27.38c1.69-12.62-7.64-36.26-22.63-51.25-6-6-9.37-14.14-9.37-22.63v-32.01c0-11.64-6.27-22.34-16.46-27.97-14.37-7.95-34.81-19.06-48.81-26.11-11.48-5.78-22.1-13.14-31.65-21.75l-.8-.72a114.792 114.792 0 0 1-18.06-20.74c-9.38-13.77-24.66-36.42-34.59-51.14 20.47-45.5 57.36-82.04 103.2-101.89l24.01 12.01C203.48 89.74 216 82.01 216 70.11v-11.3c7.99-1.29 16.12-2.11 24.39-2.42l28.3 28.3c6.25 6.25 6.25 16.38 0 22.63L264 112l-10.34 10.34c-3.12 3.12-3.12 8.19 0 11.31l4.69 4.69c3.12 3.12 3.12 8.19 0 11.31l-8 8a8.008 8.008 0 0 1-5.66 2.34h-8.99c-2.08 0-4.08.81-5.58 2.27l-9.92 9.65a8.008 8.008 0 0 0-1.58 9.31l15.59 31.19c2.66 5.32-1.21 11.58-7.15 11.58h-5.64c-1.93 0-3.79-.7-5.24-1.96l-9.28-8.06a16.017 16.017 0 0 0-15.55-3.1l-31.17 10.39a11.95 11.95 0 0 0-8.17 11.34c0 4.53 2.56 8.66 6.61 10.69l11.08 5.54c9.41 4.71 19.79 7.16 30.31 7.16s22.59 27.29 32 32h66.75c8.49 0 16.62 3.37 22.63 9.37l13.69 13.69a30.503 30.503 0 0 1 8.93 21.57 46.536 46.536 0 0 1-13.72 32.98zM417 274.25c-5.79-1.45-10.84-5-14.15-9.97l-17.98-26.97a23.97 23.97 0 0 1 0-26.62l19.59-29.38c2.32-3.47 5.5-6.29 9.24-8.15l12.98-6.49C440.2 193.59 448 223.87 448 256c0 8.67-.74 17.16-1.82 25.54L417 274.25z"/></svg>
<span class="t" style="left:1436.12px;top:426.00px;font-size:10.75px;line-height:16.8px;color:#151515;letter-spacing:-0.269px;">May 8, 2025, 1:11 PM</span>
<svg class="i" style="left:1623.00px;top:428.40px;width:3.10px;height:10.90px" viewBox="24 8 144 496" preserveAspectRatio="none" fill="#54595f"><path d="M96 184c39.8 0 72 32.2 72 72s-32.2 72-72 72-72-32.2-72-72 32.2-72 72-72zM24 80c0 39.8 32.2 72 72 72s72-32.2 72-72S135.800 8 96 8 24 40.200 24 80zm0 352c0 39.8 32.2 72 72 72s72-32.2 72-72-32.2-72-72-72-72 32.2-72 72z"/></svg>
<div class="b" style="left:13.00px;top:454.00px;width:1650.00px;height:1.00px;background:#d2d2d2"></div>
</div>
<div class="c" role="row">
<svg class="i" style="left:30px;top:461px;width:18px;height:17px" viewBox="0 0 18 17"><rect x="1.80" y="1.20" width="15.20" height="14.70" rx="7.35" fill="#009596"/></svg>
<span class="t" style="left:35.17px;top:462.00px;font-size:10.6px;line-height:15.9px;color:#fff;transform:scaleX(1.187);transform-origin:0 0;">P</span>
<a class="t" style="left:49.87px;top:461.00px;font-size:11.2px;line-height:17px;color:#0066cc;letter-spacing:0.137px;">virt-launcher-winweb01-2-<br>zcnch</a>
<svg class="i" style="left:218px;top:461px;width:24px;height:17px" viewBox="0 0 24 17"><rect x="1.00" y="1.20" width="21.10" height="14.70" rx="7.35" fill="#1e4f18"/></svg>
<span class="t" style="left:221.31px;top:462.00px;font-size:10.6px;line-height:15.9px;color:#fff;transform:scaleX(1.144);transform-origin:0 0;">NS</span>
<a class="t" style="left:242.96px;top:461.00px;font-size:11.2px;line-height:16.8px;color:#0066cc;letter-spacing:0.118px;">mass-vms</a>
<svg class="i" style="left:417.80px;top:464.00px;width:11.10px;height:11.10px" viewBox="8 8 496 496" preserveAspectRatio="none" fill="#151515"><path d="M370.72 133.28C339.458 104.008 298.888 87.962 255.848 88c-77.458.068-144.328 53.178-162.791 126.85-1.344 5.363-6.122 9.15-11.651 9.15H24.103c-7.498 0-13.194-6.807-11.807-14.176C33.933 94.924 134.813 8 256 8c66.448 0 126.791 26.136 171.315 68.685L463.03 40.97C478.149 25.851 504 36.559 504 57.941V192c0 13.255-10.745 24-24 24H345.941c-21.382 0-32.09-25.851-16.971-40.971l41.75-41.749zM32 296h134.059c21.382 0 32.09 25.851 16.971 40.971l-41.75 41.75c31.262 29.273 71.835 45.319 114.876 45.28 77.418-.07 144.315-53.144 162.787-126.849 1.344-5.363 6.122-9.15 11.651-9.15h57.304c7.498 0 13.194 6.807 11.807 14.176C478.067 417.076 377.187 504 256 504c-66.448 0-126.791-26.136-171.315-68.685L48.97 471.03C33.851 486.149 8 475.441 8 454.059V320c0-13.255 10.745-24 24-24z"/></svg>
<span class="t" style="left:432.38px;top:461.00px;font-size:11.2px;line-height:16.8px;color:#151515;letter-spacing:0.053px;">Running</span>
<span class="t" style="left:616.92px;top:462.00px;font-size:10.3px;line-height:16.8px;color:#151515;letter-spacing:-0.550px;">1/1</span>
<span class="t" style="left:754.86px;top:461.00px;font-size:11.2px;line-height:16.8px;color:#151515;letter-spacing:1.041px;">0</span>
<svg class="i" style="left:891px;top:461px;width:29px;height:17px" viewBox="0 0 29 17"><rect x="1.00" y="1.20" width="27.00" height="14.70" rx="7.35" fill="#2b9af3"/></svg>
<span class="t" style="left:895.15px;top:462.00px;font-size:10.6px;line-height:15.9px;color:#fff;transform:scaleX(1.155);transform-origin:0 0;">VMI</span>
<a class="t" style="left:922.02px;top:461.00px;font-size:11.2px;line-height:16.8px;color:#0066cc;letter-spacing:-0.103px;">winweb01-2</a>
<span class="t" style="left:1091.43px;top:461.00px;font-size:11.2px;line-height:16.8px;color:#151515;letter-spacing:-0.042px;">6,235.5 MiB</span>
<span class="t" style="left:1256.26px;top:461.00px;font-size:11.2px;line-height:16.8px;color:#151515;letter-spacing:0.141px;">0.045 cores</span>
<svg class="i" style="left:1422.20px;top:462.00px;width:10.80px;height:10.80px" viewBox="0 8 496 496" preserveAspectRatio="none" fill="#151515"><path d="M248 8C111.03 8 0 119.03 0 256s111.03 248 248 248 248-111.03 248-248S384.97 8 248 8zm82.29 357.6c-3.9 3.88-7.99 7.95-11.31 11.28-2.99 3-5.1 6.7-6.17 10.71-1.51 5.66-2.73 11.38-4.77 16.87l-17.39 46.85c-13.76 3-28 4.69-42.65 4.69v-27.38c1.69-12.62-7.64-36.26-22.63-51.25-6-6-9.37-14.14-9.37-22.63v-32.01c0-11.64-6.27-22.34-16.46-27.97-14.37-7.95-34.81-19.06-48.81-26.11-11.48-5.78-22.1-13.14-31.65-21.75l-.8-.72a114.792 114.792 0 0 1-18.06-20.74c-9.38-13.77-24.66-36.42-34.59-51.14 20.47-45.5 57.36-82.04 103.2-101.89l24.01 12.01C203.48 89.74 216 82.01 216 70.11v-11.3c7.99-1.29 16.12-2.11 24.39-2.42l28.3 28.3c6.25 6.25 6.25 16.38 0 22.63L264 112l-10.34 10.34c-3.12 3.12-3.12 8.19 0 11.31l4.69 4.69c3.12 3.12 3.12 8.19 0 11.31l-8 8a8.008 8.008 0 0 1-5.66 2.34h-8.99c-2.08 0-4.08.81-5.58 2.27l-9.92 9.65a8.008 8.008 0 0 0-1.58 9.31l15.59 31.19c2.66 5.32-1.21 11.58-7.15 11.58h-5.64c-1.93 0-3.79-.7-5.24-1.96l-9.28-8.06a16.017 16.017 0 0 0-15.55-3.1l-31.17 10.39a11.95 11.95 0 0 0-8.17 11.34c0 4.53 2.56 8.66 6.61 10.69l11.08 5.54c9.41 4.71 19.79 7.16 30.31 7.16s22.59 27.29 32 32h66.75c8.49 0 16.62 3.37 22.63 9.37l13.69 13.69a30.503 30.503 0 0 1 8.93 21.57 46.536 46.536 0 0 1-13.72 32.98zM417 274.25c-5.79-1.45-10.84-5-14.15-9.97l-17.98-26.97a23.97 23.97 0 0 1 0-26.62l19.59-29.38c2.32-3.47 5.5-6.29 9.24-8.15l12.98-6.49C440.2 193.59 448 223.87 448 256c0 8.67-.74 17.16-1.82 25.54L417 274.25z"/></svg>
<span class="t" style="left:1436.08px;top:461.00px;font-size:11.2px;line-height:16.8px;color:#151515;letter-spacing:-0.076px;">May 8, 2025, 3:25 PM</span>
<svg class="i" style="left:1623.00px;top:463.40px;width:3.10px;height:10.90px" viewBox="24 8 144 496" preserveAspectRatio="none" fill="#54595f"><path d="M96 184c39.8 0 72 32.2 72 72s-32.2 72-72 72-72-32.2-72-72 32.2-72 72-72zM24 80c0 39.8 32.2 72 72 72s72-32.2 72-72S135.800 8 96 8 24 40.200 24 80zm0 352c0 39.8 32.2 72 72 72s72-32.2 72-72-32.2-72-72-72-72 32.2-72 72z"/></svg>
<div class="b" style="left:13.00px;top:501.00px;width:1650.00px;height:1.00px;background:#d2d2d2"></div>
</div>
<div class="c" role="row">
<svg class="i" style="left:30px;top:508px;width:18px;height:17px" viewBox="0 0 18 17"><rect x="1.80" y="1.20" width="15.20" height="14.70" rx="7.35" fill="#009596"/></svg>
<span class="t" style="left:35.17px;top:509.00px;font-size:10.6px;line-height:15.9px;color:#fff;transform:scaleX(1.187);transform-origin:0 0;">P</span>
<a class="t" style="left:49.87px;top:508.00px;font-size:11.2px;line-height:17px;color:#0066cc;letter-spacing:0.207px;">virt-launcher-winweb01-4-<br>5zf6l</a>
<svg class="i" style="left:218px;top:508px;width:24px;height:17px" viewBox="0 0 24 17"><rect x="1.00" y="1.20" width="21.10" height="14.70" rx="7.35" fill="#1e4f18"/></svg>
<span class="t" style="left:221.31px;top:509.00px;font-size:10.6px;line-height:15.9px;color:#fff;transform:scaleX(1.144);transform-origin:0 0;">NS</span>
<a class="t" style="left:242.96px;top:508.00px;font-size:11.2px;line-height:16.8px;color:#0066cc;letter-spacing:0.118px;">mass-vms</a>
<svg class="i" style="left:417.80px;top:511.00px;width:11.10px;height:11.10px" viewBox="8 8 496 496" preserveAspectRatio="none" fill="#151515"><path d="M370.72 133.28C339.458 104.008 298.888 87.962 255.848 88c-77.458.068-144.328 53.178-162.791 126.85-1.344 5.363-6.122 9.15-11.651 9.15H24.103c-7.498 0-13.194-6.807-11.807-14.176C33.933 94.924 134.813 8 256 8c66.448 0 126.791 26.136 171.315 68.685L463.03 40.97C478.149 25.851 504 36.559 504 57.941V192c0 13.255-10.745 24-24 24H345.941c-21.382 0-32.09-25.851-16.971-40.971l41.75-41.749zM32 296h134.059c21.382 0 32.09 25.851 16.971 40.971l-41.75 41.75c31.262 29.273 71.835 45.319 114.876 45.28 77.418-.07 144.315-53.144 162.787-126.849 1.344-5.363 6.122-9.15 11.651-9.15h57.304c7.498 0 13.194 6.807 11.807 14.176C478.067 417.076 377.187 504 256 504c-66.448 0-126.791-26.136-171.315-68.685L48.97 471.03C33.851 486.149 8 475.441 8 454.059V320c0-13.255 10.745-24 24-24z"/></svg>
<span class="t" style="left:432.38px;top:508.00px;font-size:11.2px;line-height:16.8px;color:#151515;letter-spacing:0.053px;">Running</span>
<span class="t" style="left:616.92px;top:509.00px;font-size:10.3px;line-height:16.8px;color:#151515;letter-spacing:-0.550px;">1/1</span>
<span class="t" style="left:754.86px;top:508.00px;font-size:11.2px;line-height:16.8px;color:#151515;letter-spacing:1.041px;">0</span>
<svg class="i" style="left:891px;top:508px;width:29px;height:17px" viewBox="0 0 29 17"><rect x="1.00" y="1.20" width="27.00" height="14.70" rx="7.35" fill="#2b9af3"/></svg>
<span class="t" style="left:895.15px;top:509.00px;font-size:10.6px;line-height:15.9px;color:#fff;transform:scaleX(1.155);transform-origin:0 0;">VMI</span>
<a class="t" style="left:922.02px;top:508.00px;font-size:11.2px;line-height:16.8px;color:#0066cc;letter-spacing:-0.040px;">winweb01-4</a>
<span class="t" style="left:1091.43px;top:508.00px;font-size:11.2px;line-height:16.8px;color:#151515;letter-spacing:0.068px;">6,243.0 MiB</span>
<span class="t" style="left:1256.26px;top:508.00px;font-size:11.2px;line-height:16.8px;color:#151515;letter-spacing:0.221px;">0.044 cores</span>
<svg class="i" style="left:1422.20px;top:509.00px;width:10.80px;height:10.80px" viewBox="0 8 496 496" preserveAspectRatio="none" fill="#151515"><path d="M248 8C111.03 8 0 119.03 0 256s111.03 248 248 248 248-111.03 248-248S384.97 8 248 8zm82.29 357.6c-3.9 3.88-7.99 7.95-11.31 11.28-2.99 3-5.1 6.7-6.17 10.71-1.51 5.66-2.73 11.38-4.77 16.87l-17.39 46.85c-13.76 3-28 4.69-42.65 4.69v-27.38c1.69-12.62-7.64-36.26-22.63-51.25-6-6-9.37-14.14-9.37-22.63v-32.01c0-11.64-6.27-22.34-16.46-27.97-14.37-7.95-34.81-19.06-48.81-26.11-11.48-5.78-22.1-13.14-31.65-21.75l-.8-.72a114.792 114.792 0 0 1-18.06-20.74c-9.38-13.77-24.66-36.42-34.59-51.14 20.47-45.5 57.36-82.04 103.2-101.89l24.01 12.01C203.48 89.74 216 82.01 216 70.11v-11.3c7.99-1.29 16.12-2.11 24.39-2.42l28.3 28.3c6.25 6.25 6.25 16.38 0 22.63L264 112l-10.34 10.34c-3.12 3.12-3.12 8.19 0 11.31l4.69 4.69c3.12 3.12 3.12 8.19 0 11.31l-8 8a8.008 8.008 0 0 1-5.66 2.34h-8.99c-2.08 0-4.08.81-5.58 2.27l-9.92 9.65a8.008 8.008 0 0 0-1.58 9.31l15.59 31.19c2.66 5.32-1.21 11.58-7.15 11.58h-5.64c-1.93 0-3.79-.7-5.24-1.96l-9.28-8.06a16.017 16.017 0 0 0-15.55-3.1l-31.17 10.39a11.95 11.95 0 0 0-8.17 11.34c0 4.53 2.56 8.66 6.61 10.69l11.08 5.54c9.41 4.71 19.79 7.16 30.31 7.16s22.59 27.29 32 32h66.75c8.49 0 16.62 3.37 22.63 9.37l13.69 13.69a30.503 30.503 0 0 1 8.93 21.57 46.536 46.536 0 0 1-13.72 32.98zM417 274.25c-5.79-1.45-10.84-5-14.15-9.97l-17.98-26.97a23.97 23.97 0 0 1 0-26.62l19.59-29.38c2.32-3.47 5.5-6.29 9.24-8.15l12.98-6.49C440.2 193.59 448 223.87 448 256c0 8.67-.74 17.16-1.82 25.54L417 274.25z"/></svg>
<span class="t" style="left:1436.08px;top:508.00px;font-size:11.2px;line-height:16.8px;color:#151515;letter-spacing:-0.076px;">May 8, 2025, 3:25 PM</span>
<svg class="i" style="left:1623.00px;top:510.40px;width:3.10px;height:10.90px" viewBox="24 8 144 496" preserveAspectRatio="none" fill="#54595f"><path d="M96 184c39.8 0 72 32.2 72 72s-32.2 72-72 72-72-32.2-72-72 32.2-72 72-72zM24 80c0 39.8 32.2 72 72 72s72-32.2 72-72S135.800 8 96 8 24 40.200 24 80zm0 352c0 39.8 32.2 72 72 72s72-32.2 72-72-32.2-72-72-72-72 32.2-72 72z"/></svg>
<div class="b" style="left:13.00px;top:548.00px;width:1650.00px;height:1.00px;background:#d2d2d2"></div>
</div>
<div class="c" role="row">
<svg class="i" style="left:30px;top:556px;width:18px;height:17px" viewBox="0 0 18 17"><rect x="1.80" y="1.20" width="15.20" height="14.70" rx="7.35" fill="#009596"/></svg>
<span class="t" style="left:35.17px;top:557.00px;font-size:10.6px;line-height:15.9px;color:#fff;transform:scaleX(1.187);transform-origin:0 0;">P</span>
<a class="t" style="left:49.87px;top:556.00px;font-size:11.2px;line-height:16px;color:#0066cc;letter-spacing:0.145px;">virt-launcher-winweb01-5-<br>bfbzx</a>
<svg class="i" style="left:218px;top:556px;width:24px;height:17px" viewBox="0 0 24 17"><rect x="1.00" y="1.20" width="21.10" height="14.70" rx="7.35" fill="#1e4f18"/></svg>
<span class="t" style="left:221.31px;top:557.00px;font-size:10.6px;line-height:15.9px;color:#fff;transform:scaleX(1.144);transform-origin:0 0;">NS</span>
<a class="t" style="left:242.96px;top:556.00px;font-size:11.2px;line-height:16.8px;color:#0066cc;letter-spacing:0.118px;">mass-vms</a>
<svg class="i" style="left:417.80px;top:559.00px;width:11.10px;height:11.10px" viewBox="8 8 496 496" preserveAspectRatio="none" fill="#151515"><path d="M370.72 133.28C339.458 104.008 298.888 87.962 255.848 88c-77.458.068-144.328 53.178-162.791 126.85-1.344 5.363-6.122 9.15-11.651 9.15H24.103c-7.498 0-13.194-6.807-11.807-14.176C33.933 94.924 134.813 8 256 8c66.448 0 126.791 26.136 171.315 68.685L463.03 40.97C478.149 25.851 504 36.559 504 57.941V192c0 13.255-10.745 24-24 24H345.941c-21.382 0-32.09-25.851-16.971-40.971l41.75-41.749zM32 296h134.059c21.382 0 32.09 25.851 16.971 40.971l-41.75 41.75c31.262 29.273 71.835 45.319 114.876 45.28 77.418-.07 144.315-53.144 162.787-126.849 1.344-5.363 6.122-9.15 11.651-9.15h57.304c7.498 0 13.194 6.807 11.807 14.176C478.067 417.076 377.187 504 256 504c-66.448 0-126.791-26.136-171.315-68.685L48.97 471.03C33.851 486.149 8 475.441 8 454.059V320c0-13.255 10.745-24 24-24z"/></svg>
<span class="t" style="left:432.38px;top:556.00px;font-size:11.2px;line-height:16.8px;color:#151515;letter-spacing:0.053px;">Running</span>
<span class="t" style="left:616.92px;top:557.00px;font-size:10.3px;line-height:16.8px;color:#151515;letter-spacing:-0.550px;">1/1</span>
<span class="t" style="left:754.86px;top:556.00px;font-size:11.2px;line-height:16.8px;color:#151515;letter-spacing:1.041px;">0</span>
<svg class="i" style="left:891px;top:556px;width:29px;height:17px" viewBox="0 0 29 17"><rect x="1.00" y="1.20" width="27.00" height="14.70" rx="7.35" fill="#2b9af3"/></svg>
<span class="t" style="left:895.15px;top:557.00px;font-size:10.6px;line-height:15.9px;color:#fff;transform:scaleX(1.155);transform-origin:0 0;">VMI</span>
<a class="t" style="left:922.02px;top:556.00px;font-size:11.2px;line-height:16.8px;color:#0066cc;letter-spacing:-0.113px;">winweb01-5</a>
<span class="t" style="left:1091.43px;top:556.00px;font-size:11.2px;line-height:16.8px;color:#151515;letter-spacing:0.068px;">6,240.5 MiB</span>
<span class="t" style="left:1256.26px;top:556.00px;font-size:11.2px;line-height:16.8px;color:#151515;letter-spacing:0.221px;">0.044 cores</span>
<svg class="i" style="left:1422.20px;top:557.00px;width:10.80px;height:10.80px" viewBox="0 8 496 496" preserveAspectRatio="none" fill="#151515"><path d="M248 8C111.03 8 0 119.03 0 256s111.03 248 248 248 248-111.03 248-248S384.97 8 248 8zm82.29 357.6c-3.9 3.88-7.99 7.95-11.31 11.28-2.99 3-5.1 6.7-6.17 10.71-1.51 5.66-2.73 11.38-4.77 16.87l-17.39 46.85c-13.76 3-28 4.69-42.65 4.69v-27.38c1.69-12.62-7.64-36.26-22.63-51.25-6-6-9.37-14.14-9.37-22.63v-32.01c0-11.64-6.27-22.34-16.46-27.97-14.37-7.95-34.81-19.06-48.81-26.11-11.48-5.78-22.1-13.14-31.65-21.75l-.8-.72a114.792 114.792 0 0 1-18.06-20.74c-9.38-13.77-24.66-36.42-34.59-51.14 20.47-45.5 57.36-82.04 103.2-101.89l24.01 12.01C203.48 89.74 216 82.01 216 70.11v-11.3c7.99-1.29 16.12-2.11 24.39-2.42l28.3 28.3c6.25 6.25 6.25 16.38 0 22.63L264 112l-10.34 10.34c-3.12 3.12-3.12 8.19 0 11.31l4.69 4.69c3.12 3.12 3.12 8.19 0 11.31l-8 8a8.008 8.008 0 0 1-5.66 2.34h-8.99c-2.08 0-4.08.81-5.58 2.27l-9.92 9.65a8.008 8.008 0 0 0-1.58 9.31l15.59 31.19c2.66 5.32-1.21 11.58-7.15 11.58h-5.64c-1.93 0-3.79-.7-5.24-1.96l-9.28-8.06a16.017 16.017 0 0 0-15.55-3.1l-31.17 10.39a11.95 11.95 0 0 0-8.17 11.34c0 4.53 2.56 8.66 6.61 10.69l11.08 5.54c9.41 4.71 19.79 7.16 30.31 7.16s22.59 27.29 32 32h66.75c8.49 0 16.62 3.37 22.63 9.37l13.69 13.69a30.503 30.503 0 0 1 8.93 21.57 46.536 46.536 0 0 1-13.72 32.98zM417 274.25c-5.79-1.45-10.84-5-14.15-9.97l-17.98-26.97a23.97 23.97 0 0 1 0-26.62l19.59-29.38c2.32-3.47 5.5-6.29 9.24-8.15l12.98-6.49C440.2 193.59 448 223.87 448 256c0 8.67-.74 17.16-1.82 25.54L417 274.25z"/></svg>
<span class="t" style="left:1436.08px;top:556.00px;font-size:11.2px;line-height:16.8px;color:#151515;letter-spacing:-0.076px;">May 8, 2025, 3:25 PM</span>
<svg class="i" style="left:1623.00px;top:558.40px;width:3.10px;height:10.90px" viewBox="24 8 144 496" preserveAspectRatio="none" fill="#54595f"><path d="M96 184c39.8 0 72 32.2 72 72s-32.2 72-72 72-72-32.2-72-72 32.2-72 72-72zM24 80c0 39.8 32.2 72 72 72s72-32.2 72-72S135.800 8 96 8 24 40.200 24 80zm0 352c0 39.8 32.2 72 72 72s72-32.2 72-72-32.2-72-72-72-72 32.2-72 72z"/></svg>
<div class="b" style="left:13.00px;top:596.00px;width:1650.00px;height:1.00px;background:#d2d2d2"></div>
</div>
<div class="c" role="row">
<svg class="i" style="left:30px;top:603px;width:18px;height:17px" viewBox="0 0 18 17"><rect x="1.80" y="1.20" width="15.20" height="14.70" rx="7.35" fill="#009596"/></svg>
<span class="t" style="left:35.17px;top:604.00px;font-size:10.6px;line-height:15.9px;color:#fff;transform:scaleX(1.187);transform-origin:0 0;">P</span>
<a class="t" style="left:49.87px;top:603.00px;font-size:11.2px;line-height:16px;color:#0066cc;letter-spacing:0.182px;">virt-launcher-winweb01-9-<br>qkxc9</a>
<svg class="i" style="left:218px;top:603px;width:24px;height:17px" viewBox="0 0 24 17"><rect x="1.00" y="1.20" width="21.10" height="14.70" rx="7.35" fill="#1e4f18"/></svg>
<span class="t" style="left:221.31px;top:604.00px;font-size:10.6px;line-height:15.9px;color:#fff;transform:scaleX(1.144);transform-origin:0 0;">NS</span>
<a class="t" style="left:242.96px;top:603.00px;font-size:11.2px;line-height:16.8px;color:#0066cc;letter-spacing:0.118px;">mass-vms</a>
<svg class="i" style="left:417.80px;top:606.00px;width:11.10px;height:11.10px" viewBox="8 8 496 496" preserveAspectRatio="none" fill="#151515"><path d="M370.72 133.28C339.458 104.008 298.888 87.962 255.848 88c-77.458.068-144.328 53.178-162.791 126.85-1.344 5.363-6.122 9.15-11.651 9.15H24.103c-7.498 0-13.194-6.807-11.807-14.176C33.933 94.924 134.813 8 256 8c66.448 0 126.791 26.136 171.315 68.685L463.03 40.97C478.149 25.851 504 36.559 504 57.941V192c0 13.255-10.745 24-24 24H345.941c-21.382 0-32.09-25.851-16.971-40.971l41.75-41.749zM32 296h134.059c21.382 0 32.09 25.851 16.971 40.971l-41.75 41.75c31.262 29.273 71.835 45.319 114.876 45.28 77.418-.07 144.315-53.144 162.787-126.849 1.344-5.363 6.122-9.15 11.651-9.15h57.304c7.498 0 13.194 6.807 11.807 14.176C478.067 417.076 377.187 504 256 504c-66.448 0-126.791-26.136-171.315-68.685L48.97 471.03C33.851 486.149 8 475.441 8 454.059V320c0-13.255 10.745-24 24-24z"/></svg>
<span class="t" style="left:432.38px;top:603.00px;font-size:11.2px;line-height:16.8px;color:#151515;letter-spacing:0.053px;">Running</span>
<span class="t" style="left:616.92px;top:604.00px;font-size:10.3px;line-height:16.8px;color:#151515;letter-spacing:-0.550px;">1/1</span>
<span class="t" style="left:754.86px;top:603.00px;font-size:11.2px;line-height:16.8px;color:#151515;letter-spacing:1.041px;">0</span>
<svg class="i" style="left:891px;top:603px;width:29px;height:17px" viewBox="0 0 29 17"><rect x="1.00" y="1.20" width="27.00" height="14.70" rx="7.35" fill="#2b9af3"/></svg>
<span class="t" style="left:895.15px;top:604.00px;font-size:10.6px;line-height:15.9px;color:#fff;transform:scaleX(1.155);transform-origin:0 0;">VMI</span>
<a class="t" style="left:922.02px;top:603.00px;font-size:11.2px;line-height:16.8px;color:#0066cc;letter-spacing:-0.073px;">winweb01-9</a>
<span class="t" style="left:1091.43px;top:603.00px;font-size:11.2px;line-height:16.8px;color:#151515;letter-spacing:0.068px;">6,244.5 MiB</span>
<span class="t" style="left:1256.26px;top:603.00px;font-size:11.2px;line-height:16.8px;color:#151515;letter-spacing:0.221px;">0.044 cores</span>
<svg class="i" style="left:1422.20px;top:604.00px;width:10.80px;height:10.80px" viewBox="0 8 496 496" preserveAspectRatio="none" fill="#151515"><path d="M248 8C111.03 8 0 119.03 0 256s111.03 248 248 248 248-111.03 248-248S384.97 8 248 8zm82.29 357.6c-3.9 3.88-7.99 7.95-11.31 11.28-2.99 3-5.1 6.7-6.17 10.71-1.51 5.66-2.73 11.38-4.77 16.87l-17.39 46.85c-13.76 3-28 4.69-42.65 4.69v-27.38c1.69-12.62-7.64-36.26-22.63-51.25-6-6-9.37-14.14-9.37-22.63v-32.01c0-11.64-6.27-22.34-16.46-27.97-14.37-7.95-34.81-19.06-48.81-26.11-11.48-5.78-22.1-13.14-31.65-21.75l-.8-.72a114.792 114.792 0 0 1-18.06-20.74c-9.38-13.77-24.66-36.42-34.59-51.14 20.47-45.5 57.36-82.04 103.2-101.89l24.01 12.01C203.48 89.74 216 82.01 216 70.11v-11.3c7.99-1.29 16.12-2.11 24.39-2.42l28.3 28.3c6.25 6.25 6.25 16.38 0 22.63L264 112l-10.34 10.34c-3.12 3.12-3.12 8.19 0 11.31l4.69 4.69c3.12 3.12 3.12 8.19 0 11.31l-8 8a8.008 8.008 0 0 1-5.66 2.34h-8.99c-2.08 0-4.08.81-5.58 2.27l-9.92 9.65a8.008 8.008 0 0 0-1.58 9.31l15.59 31.19c2.66 5.32-1.21 11.58-7.15 11.58h-5.64c-1.93 0-3.79-.7-5.24-1.96l-9.28-8.06a16.017 16.017 0 0 0-15.55-3.1l-31.17 10.39a11.95 11.95 0 0 0-8.17 11.34c0 4.53 2.56 8.66 6.61 10.69l11.08 5.54c9.41 4.71 19.79 7.16 30.31 7.16s22.59 27.29 32 32h66.75c8.49 0 16.62 3.37 22.63 9.37l13.69 13.69a30.503 30.503 0 0 1 8.93 21.57 46.536 46.536 0 0 1-13.72 32.98zM417 274.25c-5.79-1.45-10.84-5-14.15-9.97l-17.98-26.97a23.97 23.97 0 0 1 0-26.62l19.59-29.38c2.32-3.47 5.5-6.29 9.24-8.15l12.98-6.49C440.2 193.59 448 223.87 448 256c0 8.67-.74 17.16-1.82 25.54L417 274.25z"/></svg>
<span class="t" style="left:1436.08px;top:603.00px;font-size:11.2px;line-height:16.8px;color:#151515;letter-spacing:-0.076px;">May 8, 2025, 3:25 PM</span>
<svg class="i" style="left:1623.00px;top:605.40px;width:3.10px;height:10.90px" viewBox="24 8 144 496" preserveAspectRatio="none" fill="#54595f"><path d="M96 184c39.8 0 72 32.2 72 72s-32.2 72-72 72-72-32.2-72-72 32.2-72 72-72zM24 80c0 39.8 32.2 72 72 72s72-32.2 72-72S135.800 8 96 8 24 40.200 24 80zm0 352c0 39.8 32.2 72 72 72s72-32.2 72-72-32.2-72-72-72-72 32.2-72 72z"/></svg>
<div class="b" style="left:13.00px;top:643.00px;width:1650.00px;height:1.00px;background:#d2d2d2"></div>
</div>
<div class="c" role="row">
<svg class="i" style="left:30px;top:650px;width:18px;height:17px" viewBox="0 0 18 17"><rect x="1.80" y="1.20" width="15.20" height="14.70" rx="7.35" fill="#009596"/></svg>
<span class="t" style="left:35.17px;top:651.00px;font-size:10.6px;line-height:15.9px;color:#fff;transform:scaleX(1.187);transform-origin:0 0;">P</span>
<a class="t" style="left:49.87px;top:650.00px;font-size:11.2px;line-height:16px;color:#0066cc;letter-spacing:0.253px;">virt-launcher-winweb02-2-<br>njrwc</a>
<svg class="i" style="left:218px;top:650px;width:24px;height:17px" viewBox="0 0 24 17"><rect x="1.00" y="1.20" width="21.10" height="14.70" rx="7.35" fill="#1e4f18"/></svg>
<span class="t" style="left:221.31px;top:651.00px;font-size:10.6px;line-height:15.9px;color:#fff;transform:scaleX(1.144);transform-origin:0 0;">NS</span>
<a class="t" style="left:242.96px;top:650.00px;font-size:11.2px;line-height:16.8px;color:#0066cc;letter-spacing:0.118px;">mass-vms</a>
<svg class="i" style="left:417.80px;top:653.00px;width:11.10px;height:11.10px" viewBox="8 8 496 496" preserveAspectRatio="none" fill="#151515"><path d="M370.72 133.28C339.458 104.008 298.888 87.962 255.848 88c-77.458.068-144.328 53.178-162.791 126.85-1.344 5.363-6.122 9.15-11.651 9.15H24.103c-7.498 0-13.194-6.807-11.807-14.176C33.933 94.924 134.813 8 256 8c66.448 0 126.791 26.136 171.315 68.685L463.03 40.97C478.149 25.851 504 36.559 504 57.941V192c0 13.255-10.745 24-24 24H345.941c-21.382 0-32.09-25.851-16.971-40.971l41.75-41.749zM32 296h134.059c21.382 0 32.09 25.851 16.971 40.971l-41.75 41.75c31.262 29.273 71.835 45.319 114.876 45.28 77.418-.07 144.315-53.144 162.787-126.849 1.344-5.363 6.122-9.15 11.651-9.15h57.304c7.498 0 13.194 6.807 11.807 14.176C478.067 417.076 377.187 504 256 504c-66.448 0-126.791-26.136-171.315-68.685L48.97 471.03C33.851 486.149 8 475.441 8 454.059V320c0-13.255 10.745-24 24-24z"/></svg>
<span class="t" style="left:432.38px;top:650.00px;font-size:11.2px;line-height:16.8px;color:#151515;letter-spacing:0.053px;">Running</span>
<span class="t" style="left:616.92px;top:651.00px;font-size:10.3px;line-height:16.8px;color:#151515;letter-spacing:-0.550px;">1/1</span>
<span class="t" style="left:754.86px;top:650.00px;font-size:11.2px;line-height:16.8px;color:#151515;letter-spacing:1.041px;">0</span>
<svg class="i" style="left:891px;top:650px;width:29px;height:17px" viewBox="0 0 29 17"><rect x="1.00" y="1.20" width="27.00" height="14.70" rx="7.35" fill="#2b9af3"/></svg>
<span class="t" style="left:895.15px;top:651.00px;font-size:10.6px;line-height:15.9px;color:#fff;transform:scaleX(1.155);transform-origin:0 0;">VMI</span>
<a class="t" style="left:922.02px;top:650.00px;font-size:11.2px;line-height:16.8px;color:#0066cc;letter-spacing:0.164px;">winweb02-2</a>
<span class="t" style="left:1091.43px;top:650.00px;font-size:11.2px;line-height:16.8px;color:#151515;letter-spacing:0.068px;">6,233.0 MiB</span>
<span class="t" style="left:1256.26px;top:650.00px;font-size:11.2px;line-height:16.8px;color:#151515;letter-spacing:0.141px;">0.045 cores</span>
<svg class="i" style="left:1422.20px;top:651.00px;width:10.80px;height:10.80px" viewBox="0 8 496 496" preserveAspectRatio="none" fill="#151515"><path d="M248 8C111.03 8 0 119.03 0 256s111.03 248 248 248 248-111.03 248-248S384.97 8 248 8zm82.29 357.6c-3.9 3.88-7.99 7.95-11.31 11.28-2.99 3-5.1 6.7-6.17 10.71-1.51 5.66-2.73 11.38-4.77 16.87l-17.39 46.85c-13.76 3-28 4.69-42.65 4.69v-27.38c1.69-12.62-7.64-36.26-22.63-51.25-6-6-9.37-14.14-9.37-22.63v-32.01c0-11.64-6.27-22.34-16.46-27.97-14.37-7.95-34.81-19.06-48.81-26.11-11.48-5.78-22.1-13.14-31.65-21.75l-.8-.72a114.792 114.792 0 0 1-18.06-20.74c-9.38-13.77-24.66-36.42-34.59-51.14 20.47-45.5 57.36-82.04 103.2-101.89l24.01 12.01C203.48 89.74 216 82.01 216 70.11v-11.3c7.99-1.29 16.12-2.11 24.39-2.42l28.3 28.3c6.25 6.25 6.25 16.38 0 22.63L264 112l-10.34 10.34c-3.12 3.12-3.12 8.19 0 11.31l4.69 4.69c3.12 3.12 3.12 8.19 0 11.31l-8 8a8.008 8.008 0 0 1-5.66 2.34h-8.99c-2.08 0-4.08.81-5.58 2.27l-9.92 9.65a8.008 8.008 0 0 0-1.58 9.31l15.59 31.19c2.66 5.32-1.21 11.58-7.15 11.58h-5.64c-1.93 0-3.79-.7-5.24-1.96l-9.28-8.06a16.017 16.017 0 0 0-15.55-3.1l-31.17 10.39a11.95 11.95 0 0 0-8.17 11.34c0 4.53 2.56 8.66 6.61 10.69l11.08 5.54c9.41 4.71 19.79 7.16 30.31 7.16s22.59 27.29 32 32h66.75c8.49 0 16.62 3.37 22.63 9.37l13.69 13.69a30.503 30.503 0 0 1 8.93 21.57 46.536 46.536 0 0 1-13.72 32.98zM417 274.25c-5.79-1.45-10.84-5-14.15-9.97l-17.98-26.97a23.97 23.97 0 0 1 0-26.62l19.59-29.38c2.32-3.47 5.5-6.29 9.24-8.15l12.98-6.49C440.2 193.59 448 223.87 448 256c0 8.67-.74 17.16-1.82 25.54L417 274.25z"/></svg>
<span class="t" style="left:1436.08px;top:650.00px;font-size:11.2px;line-height:16.8px;color:#151515;letter-spacing:-0.076px;">May 8, 2025, 3:25 PM</span>
<svg class="i" style="left:1623.00px;top:652.40px;width:3.10px;height:10.90px" viewBox="24 8 144 496" preserveAspectRatio="none" fill="#54595f"><path d="M96 184c39.8 0 72 32.2 72 72s-32.2 72-72 72-72-32.2-72-72 32.2-72 72-72zM24 80c0 39.8 32.2 72 72 72s72-32.2 72-72S135.800 8 96 8 24 40.200 24 80zm0 352c0 39.8 32.2 72 72 72s72-32.2 72-72-32.2-72-72-72-72 32.2-72 72z"/></svg>
<div class="b" style="left:13.00px;top:690.00px;width:1650.00px;height:1.00px;background:#d2d2d2"></div>
</div>
<div class="c" role="row">
<svg class="i" style="left:30px;top:697px;width:18px;height:17px" viewBox="0 0 18 17"><rect x="1.80" y="1.20" width="15.20" height="14.70" rx="7.35" fill="#009596"/></svg>
<span class="t" style="left:35.17px;top:698.00px;font-size:10.6px;line-height:15.9px;color:#fff;transform:scaleX(1.187);transform-origin:0 0;">P</span>
<a class="t" style="left:49.87px;top:697.00px;font-size:11.2px;line-height:17px;color:#0066cc;letter-spacing:0.203px;">virt-launcher-winweb02-jbdnx</a>
<svg class="i" style="left:218px;top:697px;width:24px;height:17px" viewBox="0 0 24 17"><rect x="1.00" y="1.20" width="21.10" height="14.70" rx="7.35" fill="#1e4f18"/></svg>
<span class="t" style="left:221.31px;top:698.00px;font-size:10.6px;line-height:15.9px;color:#fff;transform:scaleX(1.144);transform-origin:0 0;">NS</span>
<a class="t" style="left:243.72px;top:697.00px;font-size:11.2px;line-height:16.8px;color:#0066cc;letter-spacing:0.008px;">windows-vms</a>
<svg class="i" style="left:417.80px;top:700.00px;width:11.10px;height:11.10px" viewBox="8 8 496 496" preserveAspectRatio="none" fill="#151515"><path d="M370.72 133.28C339.458 104.008 298.888 87.962 255.848 88c-77.458.068-144.328 53.178-162.791 126.85-1.344 5.363-6.122 9.15-11.651 9.15H24.103c-7.498 0-13.194-6.807-11.807-14.176C33.933 94.924 134.813 8 256 8c66.448 0 126.791 26.136 171.315 68.685L463.03 40.97C478.149 25.851 504 36.559 504 57.941V192c0 13.255-10.745 24-24 24H345.941c-21.382 0-32.09-25.851-16.971-40.971l41.75-41.749zM32 296h134.059c21.382 0 32.09 25.851 16.971 40.971l-41.75 41.75c31.262 29.273 71.835 45.319 114.876 45.28 77.418-.07 144.315-53.144 162.787-126.849 1.344-5.363 6.122-9.15 11.651-9.15h57.304c7.498 0 13.194 6.807 11.807 14.176C478.067 417.076 377.187 504 256 504c-66.448 0-126.791-26.136-171.315-68.685L48.97 471.03C33.851 486.149 8 475.441 8 454.059V320c0-13.255 10.745-24 24-24z"/></svg>
<span class="t" style="left:432.38px;top:697.00px;font-size:11.2px;line-height:16.8px;color:#151515;letter-spacing:0.053px;">Running</span>
<span class="t" style="left:616.92px;top:698.00px;font-size:10.3px;line-height:16.8px;color:#151515;letter-spacing:-0.550px;">1/1</span>
<span class="t" style="left:754.86px;top:697.00px;font-size:11.2px;line-height:16.8px;color:#151515;letter-spacing:1.041px;">0</span>
<svg class="i" style="left:891px;top:697px;width:29px;height:17px" viewBox="0 0 29 17"><rect x="1.00" y="1.20" width="27.00" height="14.70" rx="7.35" fill="#2b9af3"/></svg>
<span class="t" style="left:895.15px;top:698.00px;font-size:10.6px;line-height:15.9px;color:#fff;transform:scaleX(1.155);transform-origin:0 0;">VMI</span>
<a class="t" style="left:922.02px;top:697.00px;font-size:11.2px;line-height:16.8px;color:#0066cc;letter-spacing:0.062px;">winweb02</a>
<span class="t" style="left:1091.20px;top:697.00px;font-size:10.53px;line-height:16.8px;color:#151515;letter-spacing:-0.294px;">1,123.6 MiB</span>
<span class="t" style="left:1256.29px;top:697.00px;font-size:10.53px;line-height:16.8px;color:#151515;letter-spacing:-0.293px;">0.121 cores</span>
<svg class="i" style="left:1422.20px;top:698.00px;width:10.80px;height:10.80px" viewBox="0 8 496 496" preserveAspectRatio="none" fill="#151515"><path d="M248 8C111.03 8 0 119.03 0 256s111.03 248 248 248 248-111.03 248-248S384.97 8 248 8zm82.29 357.6c-3.9 3.88-7.99 7.95-11.31 11.28-2.99 3-5.1 6.7-6.17 10.71-1.51 5.66-2.73 11.38-4.77 16.87l-17.39 46.85c-13.76 3-28 4.69-42.65 4.69v-27.38c1.69-12.62-7.64-36.26-22.63-51.25-6-6-9.37-14.14-9.37-22.63v-32.01c0-11.64-6.27-22.34-16.46-27.97-14.37-7.95-34.81-19.06-48.81-26.11-11.48-5.78-22.1-13.14-31.65-21.75l-.8-.72a114.792 114.792 0 0 1-18.06-20.74c-9.38-13.77-24.66-36.42-34.59-51.14 20.47-45.5 57.36-82.04 103.2-101.89l24.01 12.01C203.48 89.74 216 82.01 216 70.11v-11.3c7.99-1.29 16.12-2.11 24.39-2.42l28.3 28.3c6.25 6.25 6.25 16.38 0 22.63L264 112l-10.34 10.34c-3.12 3.12-3.12 8.19 0 11.31l4.69 4.69c3.12 3.12 3.12 8.19 0 11.31l-8 8a8.008 8.008 0 0 1-5.66 2.34h-8.99c-2.08 0-4.08.81-5.58 2.27l-9.92 9.65a8.008 8.008 0 0 0-1.58 9.31l15.59 31.19c2.66 5.32-1.21 11.58-7.15 11.58h-5.64c-1.93 0-3.79-.7-5.24-1.96l-9.28-8.06a16.017 16.017 0 0 0-15.55-3.1l-31.17 10.39a11.95 11.95 0 0 0-8.17 11.34c0 4.53 2.56 8.66 6.61 10.69l11.08 5.54c9.41 4.71 19.79 7.16 30.31 7.16s22.59 27.29 32 32h66.75c8.49 0 16.62 3.37 22.63 9.37l13.69 13.69a30.503 30.503 0 0 1 8.93 21.57 46.536 46.536 0 0 1-13.72 32.98zM417 274.25c-5.79-1.45-10.84-5-14.15-9.97l-17.98-26.97a23.97 23.97 0 0 1 0-26.62l19.59-29.38c2.32-3.47 5.5-6.29 9.24-8.15l12.98-6.49C440.2 193.59 448 223.87 448 256c0 8.67-.74 17.16-1.82 25.54L417 274.25z"/></svg>
<span class="t" style="left:1436.08px;top:697.00px;font-size:11.2px;line-height:16.8px;color:#151515;letter-spacing:-0.197px;">May 8, 2025, 3:15 PM</span>
<svg class="i" style="left:1623.00px;top:699.40px;width:3.10px;height:10.90px" viewBox="24 8 144 496" preserveAspectRatio="none" fill="#54595f"><path d="M96 184c39.8 0 72 32.2 72 72s-32.2 72-72 72-72-32.2-72-72 32.2-72 72-72zM24 80c0 39.8 32.2 72 72 72s72-32.2 72-72S135.800 8 96 8 24 40.200 24 80zm0 352c0 39.8 32.2 72 72 72s72-32.2 72-72-32.2-72-72-72-72 32.2-72 72z"/></svg>
<div class="b" style="left:13.00px;top:725.00px;width:1650.00px;height:1.00px;background:#d2d2d2"></div>
</div>
</div>
</main>
</body></html>
